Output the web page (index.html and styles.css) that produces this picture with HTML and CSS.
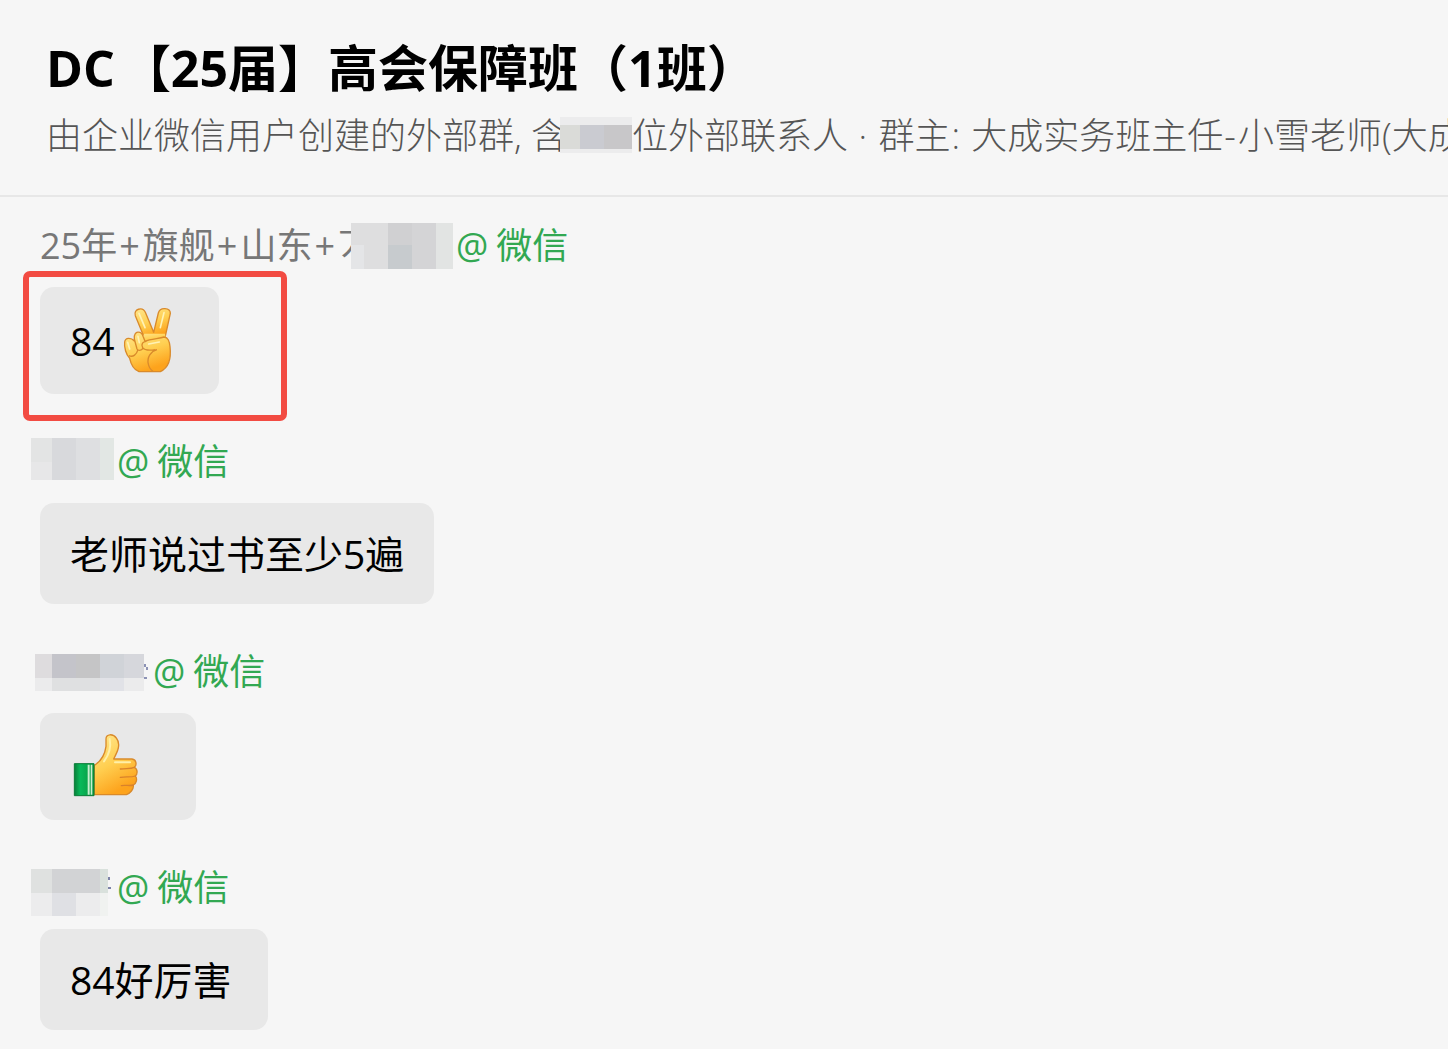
FILE: index.html
```html
<!DOCTYPE html>
<html lang="zh-CN">
<head>
<meta charset="utf-8">
<title>DC【25届】高会保障班（1班）</title>
<link rel="stylesheet" href="styles.css">
</head>
<body>
<header class="header">
  <h1><span class="prefix">DC</span>【25届】高会保障班（1班<span class="paren">）</span></h1>
  <p class="info">由企业微信用户创建的外部群, 含<svg class="mask mask-count" width="72" height="36" viewBox="0 0 72 36" shape-rendering="crispEdges"><path fill="#ececed" d="M0 0h72v36H0z"/><path fill="#dadbd8" d="M0 8h20v24H0z"/><path fill="#cacbd1" d="M20 8h24v24H20z"/><path fill="#c8c7c9" d="M44 8h28v24H44z"/></svg>位外部联系人 <i>·</i> 群主<i>:</i> 大成实务班主任<i>-</i>小雪老师(大成</p>
</header>

<main class="chat">
  <section class="message">
    <div class="name">
      <span class="nick">25年<i>+</i>旗舰<i>+</i>山东<i>+</i>丆</span>
      <svg class="mask mask-long" width="102" height="46" viewBox="0 0 102 46" shape-rendering="crispEdges"><path fill="#dededf" d="M0 0h37v22H0zM13 22h24v24H13z"/><path fill="#e4e5e7" d="M0 22h13v24H0z"/><path fill="#d0d0d2" d="M37 0h24v22H37z"/><path fill="#d4d4d6" d="M61 0h24v46H61z"/><path fill="#c7cbce" d="M37 22h24v24H37z"/><path fill="#e2e4e3" d="M85 0h17v46H85z"/></svg>
      <span class="from">@<b>微信</b></span>
    </div>
    <div class="bubble with-emoji marked">
      84<svg class="emoji" width="74" height="71" viewBox="18 30 222 213">
        <defs>
          <linearGradient id="skin" x1="0" y1="0" x2="0.4" y2="1">
            <stop offset="0" stop-color="#ffe78e"/>
            <stop offset="0.55" stop-color="#ffcf51"/>
            <stop offset="1" stop-color="#fda31c"/>
          </linearGradient>
        </defs>
        <g fill="url(#skin)" stroke="#d98a2b" stroke-width="4" stroke-linejoin="round">
          <path d="M106 128 79 62C72 42 101 34 109 52L134 112 148 54C153 35 184 38 184 55L168 128Z"/>
          <path stroke="none" d="M86 150 106 116 168 116 172 150Z"/>
          <path d="M76 130C74 106 97 106 103 126L108 139C125 131 151 131 165 126C178 128 181 138 183 155C187 190 178 219 154 230H90C77 225 66 209 62 190C51 179 45 157 47 141C49 127 66 127 76 138Z"/>
          <path fill="none" d="M76 132 84 162C88 169 102 166 101 158M101 158C95 146 102 140 112 139M101 158C108 168 127 166 139 164M144 164C126 169 113 187 118 207C120 218 126 225 132 229M60 182C73 188 83 177 86 166"/>
        </g>
        <path fill="none" stroke="#fff2b5" stroke-width="5" stroke-linecap="round" d="M90 55 108 98M165 53 154 98M56 142 62 162M87 124 91 143M119 147 151 141"/>
      </svg>
    </div>
  </section>

  <section class="message">
    <div class="name">
      <svg class="mask mask-first" width="83" height="42" viewBox="0 0 83 42" shape-rendering="crispEdges"><path fill="#e3e4e4" d="M0 0h21v24H0z"/><path fill="#e7e7e8" d="M0 24h21v18H0z"/><path fill="#d8d9dc" d="M21 0h24v42H21z"/><path fill="#dedfe1" d="M45 0h24v42H45z"/><path fill="#e2e7e4" d="M69 0h14v42H69z"/></svg>
      <span class="from">@<b>微信</b></span>
    </div>
    <div class="bubble">老师说过书至少5遍</div>
  </section>

  <section class="message">
    <div class="name">
      <svg class="mask mask-second" width="115" height="37" viewBox="0 0 115 37" shape-rendering="crispEdges"><path fill="#dedcde" d="M0 0h17v24H0z"/><path fill="#c4c4ca" d="M17 0h24v24H17z"/><path fill="#c5c5c6" d="M41 0h24v24H41z"/><path fill="#d0d3d8" d="M65 0h24v24H65z"/><path fill="#d6d7dc" d="M89 0h20v24H89z"/><path fill="#ebebec" d="M0 24h17v13H0zM89 24h20v13H89z"/><path fill="#dfe0e1" d="M17 24h48v13H17z"/><path fill="#e1e2e7" d="M65 24h24v13H65z"/><path fill="#8c92b5" d="M109 10h2v3h-2zM111 13h2v3h-2zM109 23h3v2h-3z"/></svg>
      <span class="from">@<b>微信</b></span>
    </div>
    <div class="bubble with-emoji">
      <svg class="emoji" width="96" height="71" viewBox="30 18 288 213">
        <defs>
          <linearGradient id="cuff">
            <stop offset="0" stop-color="#087f38"/>
            <stop offset="0.3" stop-color="#08b95a"/>
            <stop offset="1" stop-color="#08953f"/>
          </linearGradient>
        </defs>
        <path fill="url(#skin)" stroke="#d98a2b" stroke-width="4" stroke-linejoin="round" d="M103 121C122 109 135 87 138 64V43C137 25 160 26 169 39C184 58 172 81 161 102H216C230 104 231 121 223 127C234 132 233 148 226 153C233 161 229 176 220 180C222 193 210 205 199 209H103Z"/>
        <path fill="none" stroke="#d9822b" stroke-width="4" stroke-linecap="round" d="M181 132C197 129 211 133 223 127M181 157C197 154 213 158 226 153M184 182C197 179 209 184 220 180"/>
        <path fill="none" stroke="#fff0a8" stroke-width="6" stroke-linecap="round" d="M149 42C154 67 144 93 132 109M165 112H210"/>
        <path fill="url(#cuff)" stroke="#087b36" stroke-width="3" d="M43 116H102V212H43Z"/>
        <path fill="#c8efcf" d="M83 119h6v90h-6zM92 119h5v90h-5z"/>
      </svg>
    </div>
  </section>

  <section class="message">
    <div class="name">
      <svg class="mask mask-third" width="80" height="47" viewBox="0 0 80 47" shape-rendering="crispEdges"><path fill="#dfe1e0" d="M0 0h21v24H0z"/><path fill="#d2d3d5" d="M21 0h48v24H21z"/><path fill="#d9e1dc" d="M69 0h8v24h-8z"/><path fill="#ececed" d="M0 24h21v23H0zM45 24h24v23H45z"/><path fill="#dfe0e4" d="M21 24h24v23H21z"/><path fill="#f0f2f0" d="M69 24h8v23h-8z"/><path fill="#7d84a8" d="M77 8h2v3h-2zM77 18h3v2h-3z"/></svg>
      <span class="from">@<b>微信</b></span>
    </div>
    <div class="bubble">84好厉害</div>
  </section>
</main>
</body>
</html>
```

FILE: styles.css
```css
body {
  margin: 0;
  background: #f6f6f6;
  color: #000;
  font-family: "Open Sans", "Noto Sans CJK SC", sans-serif;
  overflow-x: hidden;
}

.header {
  padding: 34px 0 34px 46px;
  border-bottom: 2px solid #e7e7e7;
}

h1 {
  margin: 0;
  font-size: 50px;
  line-height: 68px;
  font-weight: 700;
  white-space: nowrap;
}

.prefix {
  margin-right: 6px;
}

.paren {
  display: inline-block;
  width: 25px;
}

.info {
  margin: 8px 0 0;
  color: #555;
  font-size: 36px;
  line-height: 51px;
  font-weight: 300;
  white-space: nowrap;
  overflow: hidden;
}

.info i {
  font-style: normal;
  padding: 0 2px 0 1px;
}

.mask {
  flex: none;
}

.mask-count {
  vertical-align: -4px;
  margin-left: -7px;
}

/* messages */
.chat {
  padding: 25px 40px 19px;
}

.message {
  margin-bottom: 44px;
}

.message:last-child {
  margin-bottom: 0;
}

.name {
  display: flex;
  align-items: center;
  height: 48px;
  margin-bottom: 17px;
  font-size: 36px;
  line-height: 48px;
  color: #777;
  white-space: nowrap;
}

.nick i {
  font-style: normal;
  padding: 0 3px 0 2px;
}

.mask-long {
  margin-left: -23px;
}

.mask-first {
  margin: 0 0 6px -9px;
}

.mask-second {
  margin-left: -5px;
}

.mask-third {
  margin: 8px 3px 0 -9px;
}

.from {
  margin-left: 3px;
  color: #32a852;
}

.from b {
  margin-left: 8px;
  font-weight: 400;
}

.bubble {
  position: relative;
  display: flex;
  align-items: center;
  box-sizing: border-box;
  width: fit-content;
  min-width: 156px;
  min-height: 101px;
  padding: 0 30px;
  border-radius: 14px;
  background: #e8e8e8;
  font-size: 39px;
  line-height: 56px;
}

.bubble:not(.with-emoji) {
  min-width: 228px;
}

.with-emoji {
  min-height: 107px;
}

.emoji {
  display: block;
}

/* red frame around the score */
.marked::after {
  content: "";
  position: absolute;
  top: -16px;
  left: -17px;
  box-sizing: border-box;
  width: 264px;
  height: 150px;
  border: 6px solid #f24b42;
  border-radius: 7px;
}
```
